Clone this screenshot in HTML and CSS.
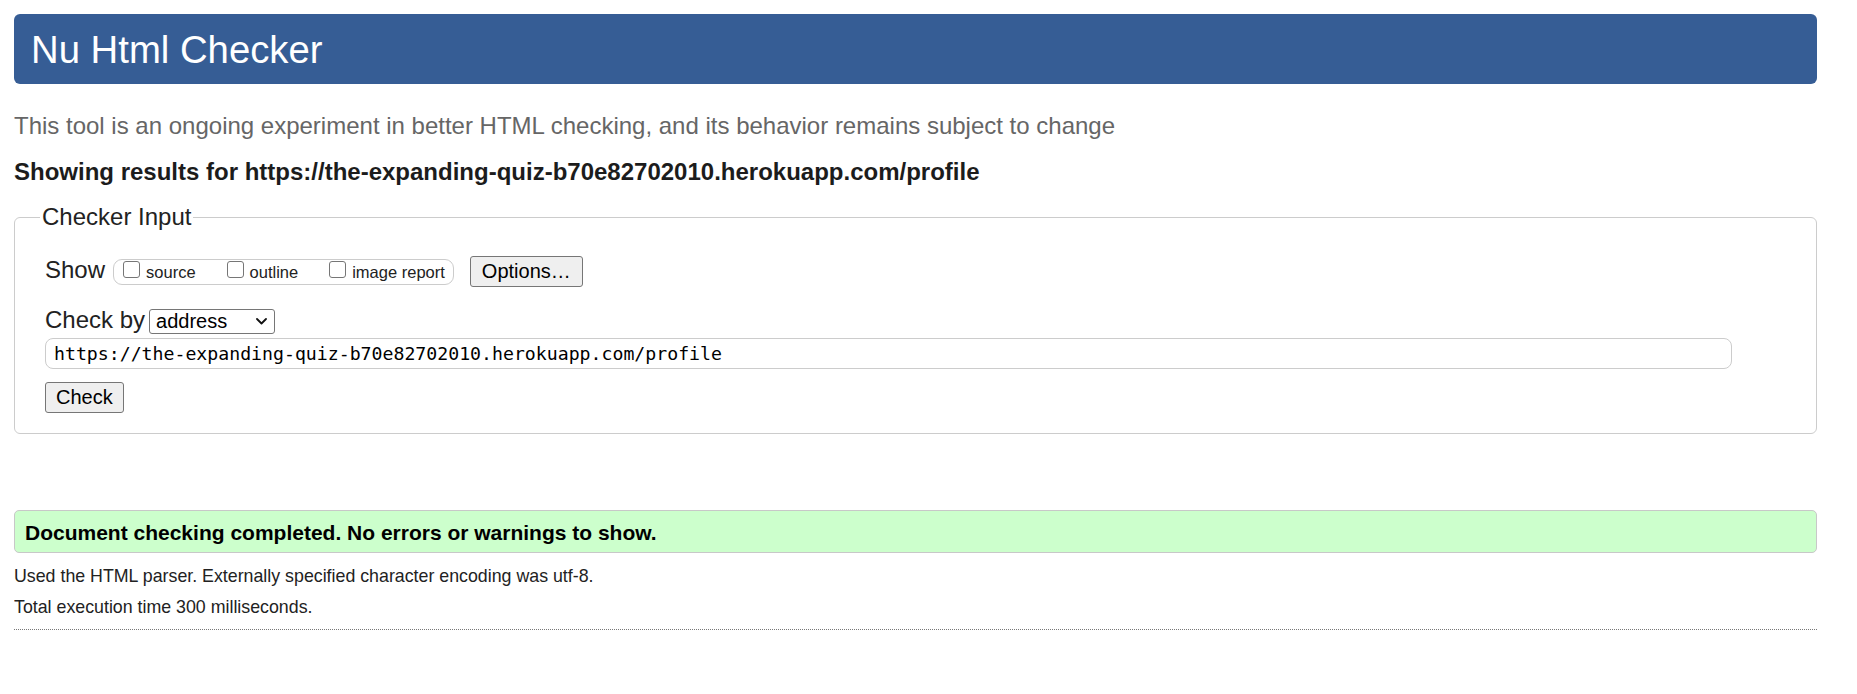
FILE: index.html
```html
<!DOCTYPE html>
<html lang="en">
<head>
<meta charset="utf-8">
<title>Nu Html Checker</title>
<link rel="stylesheet" href="styles.css">
</head>
<body>
<h1 class="banner">Nu Html Checker</h1>
<p class="intro">This tool is an ongoing experiment in better HTML checking, and its behavior remains subject to change</p>
<p class="results-for">Showing results for https://the-expanding-quiz-b70e82702010.herokuapp.com/profile</p>
<form class="checker">
  <fieldset class="checker-input">
    <legend class="legend">Checker Input</legend>
    <div class="row">
      <span class="row-label">Show</span>
      <span class="toggle-group">
        <label class="toggle"><input type="checkbox" class="toggle-box">source</label><label class="toggle"><input type="checkbox" class="toggle-box">outline</label><label class="toggle toggle-last"><input type="checkbox" class="toggle-box">image report</label>
      </span>
      <button type="button" class="btn btn-options">Options…</button>
    </div>
    <div class="row row-checkby">
      <label class="row-label" for="docselect">Check by</label>
      <span class="select-wrap">
        <select id="docselect" class="select">
          <option>address</option>
          <option>file upload</option>
          <option>text input</option>
        </select>
        <svg class="chevron" width="11" height="7" viewBox="0 0 11 7" aria-hidden="true"><path d="M1 1 L5.5 5.5 L10 1" fill="none" stroke="#111" stroke-width="1.8" stroke-linecap="round" stroke-linejoin="round"/></svg>
      </span>
    </div>
    <div class="row row-url">
      <input type="url" class="url-input" value="https://the-expanding-quiz-b70e82702010.herokuapp.com/profile">
    </div>
    <div class="row row-submit">
      <button type="button" class="btn btn-check">Check</button>
    </div>
  </fieldset>
</form>
<div class="success">
  <p class="success-text">Document checking completed. No errors or warnings to show.</p>
</div>
<p class="meta meta-first">Used the HTML parser. Externally specified character encoding was utf-8.</p>
<p class="meta">Total execution time 300 milliseconds.</p>
<hr class="rule">
</body>
</html>
```
FILE: styles.css
```css
html {
  background: #fff;
}

body {
  margin: 14px 40px 0 14px;
  font-family: "Liberation Sans", Arial, sans-serif;
  color: #222;
}

.banner {
  margin: 0;
  padding: 15px 17px 14px;
  background: #365d95;
  color: #fff;
  font-size: 38.3px;
  font-weight: normal;
  line-height: 41px;
  border-radius: 6px;
}

.intro {
  margin: 28px 0 0;
  font-size: 24px;
  color: #666;
}

.results-for {
  margin: 18px 0 0;
  font-size: 24px;
  font-weight: bold;
  color: #1c1c1c;
}

.checker {
  margin: 0;
}

.checker-input {
  margin: 17px 0 0;
  padding: 25px 84px 20px 30px;
  border: 1px solid #ccc;
  border-radius: 6px;
  min-width: 0;
}

.legend {
  padding: 0 2px;
  margin-left: -5px;
  font-size: 24px;
  color: #222;
}

.row {
  display: flex;
  align-items: baseline;
}

.row-label {
  font-size: 24px;
  color: #222;
}

.toggle-group {
  margin-left: 8px;
  padding: 1px 8px 2px 9px;
  border: 1px solid #ccc;
  border-radius: 9px;
  font-size: 16.5px;
  line-height: 20px;
  white-space: nowrap;
  color: #222;
}

.toggle {
  margin-right: 31px;
}

.toggle-last {
  margin-right: 0;
}

.toggle-box {
  appearance: none;
  -webkit-appearance: none;
  display: inline-block;
  width: 17px;
  height: 17px;
  margin: 0 6px 0 0;
  border: 1px solid #767676;
  border-radius: 3px;
  background: #fff;
  vertical-align: baseline;
}

.btn {
  font-family: "Liberation Sans", Arial, sans-serif;
  font-size: 20px;
  line-height: normal;
  padding: 3px 11px;
  margin: 0;
  border: 1px solid #767676;
  border-radius: 3px;
  background: #efefef;
  color: #000;
}

.btn-options {
  margin-left: 16px;
}

.btn-check {
  padding: 3px 10px;
}

.row-checkby {
  margin-top: 19px;
}

.select-wrap {
  position: relative;
  display: inline-block;
  margin-left: 4px;
}

.select {
  appearance: none;
  -webkit-appearance: none;
  width: 126px;
  height: 25px;
  margin: 0;
  padding: 0 24px 0 6px;
  border: 1px solid #767676;
  border-radius: 3px;
  background: #fff;
  font-family: "Liberation Sans", Arial, sans-serif;
  font-size: 20px;
  color: #000;
}

.chevron {
  position: absolute;
  right: 8px;
  top: 9px;
  pointer-events: none;
}

.row-url {
  margin-top: 4px;
}

.url-input {
  box-sizing: border-box;
  width: 100%;
  height: 31px;
  margin: 0;
  padding: 0 8px;
  border: 1px solid #ccc;
  border-radius: 8px;
  font-family: "DejaVu Sans Mono", "Liberation Mono", monospace;
  font-size: 18.2px;
  color: #000;
  background: #fff;
}

.row-submit {
  margin-top: 13px;
}

.success {
  margin-top: 76px;
  padding: 10px 10px 8px;
  border: 1px solid #c8c8c8;
  border-radius: 5px;
  background: #ccffcc;
}

.success-text {
  margin: 0;
  font-size: 21px;
  line-height: 23px;
  font-weight: bold;
  color: #000;
}

.meta {
  margin: 0;
  font-size: 17.8px;
  line-height: 31px;
  color: #222;
}

.meta-first {
  margin-top: 8px;
}

.rule {
  height: 0;
  margin: 6px 0 0;
  border: 0;
  border-top: 1px dotted #777;
}
```
